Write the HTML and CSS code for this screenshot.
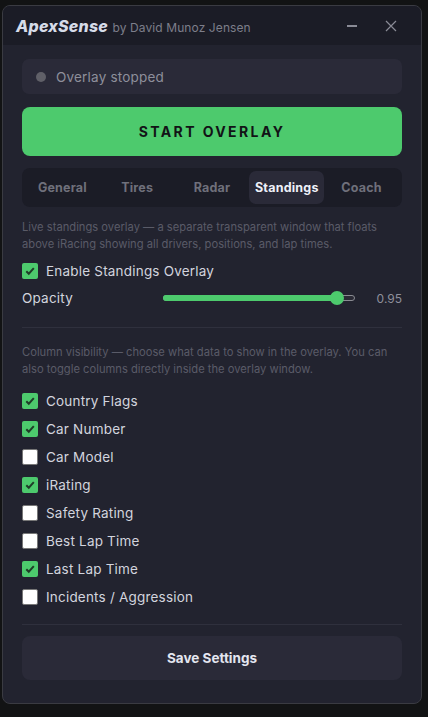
FILE: index.html
```html
<!DOCTYPE html>
<html lang="en">
<head>
  <meta charset="UTF-8">
  <meta name="viewport" content="width=device-width, initial-scale=1.0">
  <title>ApexSense</title>
  <link rel="stylesheet" href="styles.css">
</head>
<body>
<div class="window">
  <div class="titlebar">
    <div class="brand"><span class="logo">ApexSense</span> <span class="by">by David Munoz Jensen</span></div>
    <div class="win-btns">
      <span class="btn-min"></span>
      <svg class="btn-close" width="12" height="12" viewBox="0 0 12 12"><path d="M1 1L11 11M11 1L1 11" stroke="#8a8b96" stroke-width="1.2" fill="none"/></svg>
    </div>
  </div>

  <div class="content">
    <div class="status"><span class="dot"></span>Overlay stopped</div>
    <button class="start">START OVERLAY</button>

    <div class="tabs">
      <div class="tab">General</div>
      <div class="tab">Tires</div>
      <div class="tab">Radar</div>
      <div class="tab active">Standings</div>
      <div class="tab">Coach</div>
    </div>

    <p class="hint">Live standings overlay — a separate transparent window that floats above iRacing showing all drivers, positions, and lap times.</p>

    <label class="check on"><span class="box"><svg width="12" height="12" viewBox="0 0 12 12"><path d="M2.3 6.2L4.8 8.7L9.8 3.2" stroke="#1f3d28" stroke-width="2" fill="none"/></svg></span>Enable Standings Overlay</label>

    <div class="opacity-row">
      <span class="opacity-label">Opacity</span>
      <div class="slider">
        <div class="fill" style="width: 91%"></div>
        <div class="thumb" style="left: 91%"></div>
      </div>
      <span class="opacity-val">0.95</span>
    </div>

    <div class="divider"></div>

    <p class="hint hint2">Column visibility — choose what data to show in the overlay. You can also toggle columns directly inside the overlay window.</p>

    <div class="columns">
      <label class="check on"><span class="box"><svg width="12" height="12" viewBox="0 0 12 12"><path d="M2.3 6.2L4.8 8.7L9.8 3.2" stroke="#1f3d28" stroke-width="2" fill="none"/></svg></span>Country Flags</label>
      <label class="check on"><span class="box"><svg width="12" height="12" viewBox="0 0 12 12"><path d="M2.3 6.2L4.8 8.7L9.8 3.2" stroke="#1f3d28" stroke-width="2" fill="none"/></svg></span>Car Number</label>
      <label class="check"><span class="box"></span>Car Model</label>
      <label class="check on"><span class="box"><svg width="12" height="12" viewBox="0 0 12 12"><path d="M2.3 6.2L4.8 8.7L9.8 3.2" stroke="#1f3d28" stroke-width="2" fill="none"/></svg></span>iRating</label>
      <label class="check"><span class="box"></span>Safety Rating</label>
      <label class="check"><span class="box"></span>Best Lap Time</label>
      <label class="check on"><span class="box"><svg width="12" height="12" viewBox="0 0 12 12"><path d="M2.3 6.2L4.8 8.7L9.8 3.2" stroke="#1f3d28" stroke-width="2" fill="none"/></svg></span>Last Lap Time</label>
      <label class="check"><span class="box"></span>Incidents / Aggression</label>
    </div>

    <div class="divider divider2"></div>

    <button class="save">Save Settings</button>
  </div>
</div>
</body>
</html>
```

FILE: styles.css
```css
* {
  box-sizing: border-box;
  font-family: Inter, "Open Sans", sans-serif;
}
body {
  margin: 0;
  background: #121314;
}
.window {
  margin: 5px 6px 0 2px;
  height: 699px;
  border: 1px solid #3a3b42;
  border-radius: 8px;
  background: #22232f;
  overflow: hidden;
}
.titlebar {
  height: 39px;
  background: #1b1c26;
  display: flex;
  align-items: center;
  justify-content: space-between;
  padding: 0 24px 0 13px;
}
.logo {
  font-weight: 800;
  font-style: italic;
  font-size: 16px;
  letter-spacing: 0.2px;
  color: #d6dbe8;
}
.by {
  font-size: 12px;
  letter-spacing: 0.1px;
  color: #7d7e8a;
}
.win-btns {
  display: flex;
  align-items: center;
  gap: 28px;
}
.btn-min {
  width: 10px;
  height: 2px;
  background: #8a8b96;
}
.content {
  padding: 14px 19px 0 19px;
}
.status {
  height: 35px;
  background: #2a2a38;
  border-radius: 7px;
  display: flex;
  align-items: center;
  padding-left: 14px;
  font-size: 13.5px;
  letter-spacing: 0.2px;
  color: #8e8f9b;
}
.dot {
  width: 10px;
  height: 10px;
  border-radius: 50%;
  background: #606068;
  margin-right: 10px;
}
.start {
  display: block;
  width: 100%;
  height: 49px;
  margin-top: 13px;
  border: none;
  border-radius: 8px;
  background: #4dca6d;
  color: #121316;
  font-weight: 700;
  font-size: 14px;
  letter-spacing: 2.4px;
}
.tabs {
  margin-top: 12px;
  height: 39px;
  background: #1b1c26;
  border-radius: 8px;
  display: flex;
  padding: 3px;
}
.tab {
  flex: 1;
  display: flex;
  align-items: center;
  justify-content: center;
  font-size: 12.5px;
  font-weight: 700;
  letter-spacing: 0.2px;
  color: #6f707b;
  border-radius: 7px;
}
.tab.active {
  background: #2a2a38;
  color: #eef0f8;
}
.hint {
  margin: 12px 0 0;
  font-size: 11.2px;
  line-height: 17px;
  color: #5a5b68;
}
.check {
  display: flex;
  align-items: center;
  font-size: 13.5px;
  letter-spacing: 0.2px;
  color: #d2d4de;
  height: 16px;
}
.box {
  width: 16px;
  height: 16px;
  border-radius: 2px;
  background: #fff;
  border: 1px solid #777;
  margin-right: 8px;
  display: flex;
  align-items: center;
  justify-content: center;
}
.check.on .box {
  background: #4dca6d;
  border: none;
}
.hint + .check {
  margin-top: 10px;
}
.opacity-row {
  display: flex;
  align-items: center;
  margin-top: 11px;
  height: 16px;
}
.opacity-label {
  width: 141px;
  font-size: 13.5px;
  letter-spacing: 0.2px;
  color: #d2d4de;
}
.slider {
  position: relative;
  width: 192px;
  height: 6px;
  border-radius: 3px;
  background: #2a2a35;
  border: 1px solid #8a8b92;
}
.fill {
  position: absolute;
  left: -1px;
  top: -1px;
  height: 6px;
  border-radius: 3px;
  background: #4dca6d;
}
.thumb {
  position: absolute;
  top: 50%;
  width: 14px;
  height: 14px;
  margin: -7px 0 0 -7px;
  border-radius: 50%;
  background: #4dca6d;
}
.opacity-val {
  margin-left: auto;
  font-size: 12px;
  color: #8e8f9b;
}
.divider {
  height: 1px;
  background: #2f303d;
  margin-top: 21px;
}
.hint2 {
  margin-top: 16px;
}
.columns {
  margin-top: 15px;
  display: flex;
  flex-direction: column;
  gap: 12px;
}
.divider2 {
  margin-top: 19px;
}
.save {
  display: block;
  width: 100%;
  height: 44px;
  margin-top: 11px;
  border: none;
  border-radius: 8px;
  background: #2a2a38;
  color: #e4e6f0;
  font-weight: 700;
  font-size: 13.5px;
}
```
